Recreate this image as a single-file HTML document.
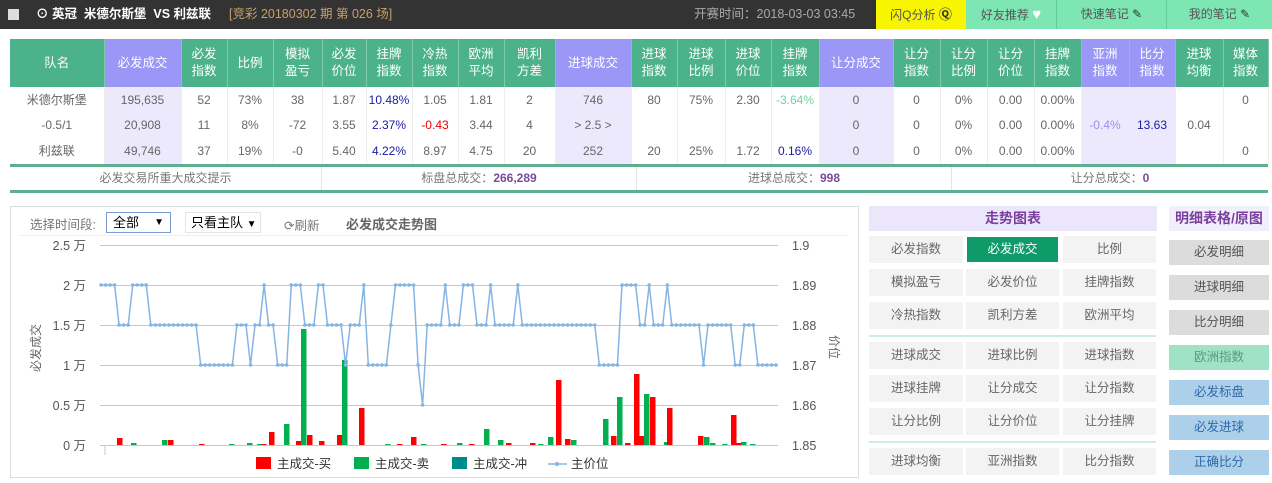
<!DOCTYPE html>
<html><head><meta charset="utf-8">
<style>
*{margin:0;padding:0;box-sizing:border-box}
body{width:1272px;height:483px;background:#fff;font-family:"Liberation Sans","Noto Sans CJK SC",sans-serif;font-size:12px;color:#555;position:relative;overflow:hidden}
.abs{position:absolute}
#top{left:0;top:0;width:1272px;height:29px;background:#333}
.tb{position:absolute;top:0;height:29px;line-height:29px;text-align:center;font-size:12px;color:#555}
table{border-collapse:collapse;position:absolute;left:10px;top:39px;width:1258px;table-layout:fixed}
th{background:#4cb28b;color:#fff;font-weight:normal;font-size:12.5px;height:48px;line-height:17px;border-right:1px solid #7fcaa9}
th.p{background:#9a97f6}
td{height:25.5px;text-align:center;font-size:12px;color:#666;border-right:1px solid #eee}
td.p{background:#ede9fc}
.bl{color:#1a1aa0}.rd{color:#e00}.gr{color:#6fd3a5}.pl{color:#9b8fe8}
#sum{left:10px;top:164px;width:1258px;height:29px;border-top:3px solid #5fae90;border-bottom:3px solid #5fae90}
#sum div{position:absolute;top:0;height:23px;line-height:23px;text-align:center;color:#777;border-right:1px solid #e5e5e5}
#sum b{color:#7a4a9a}
.btn{position:absolute;height:27px;line-height:27px;text-align:center;background:#f3f3f3;color:#666;font-size:12.5px}
.rb{position:absolute;left:1169px;width:100px;height:25px;line-height:25px;text-align:center;font-size:12.5px;background:#dcdcdc;color:#555}
</style></head><body>
<div id="top" class="abs"></div>
<div class="abs" style="left:8px;top:9px;width:11px;height:11px;background:#ddd"></div>
<div class="abs" style="left:36px;top:0;height:29px;line-height:29px;color:#fff;font-weight:bold;font-size:12.5px">⊙ 英冠&nbsp; 米德尔斯堡&nbsp; VS 利兹联</div>
<div class="abs" style="left:229px;top:0;height:29px;line-height:29px;color:#c6a06a;font-size:12.5px">[竞彩 20180302 期 第 026 场]</div>
<div class="abs" style="left:694px;top:0;height:29px;line-height:29px;color:#aaa;font-size:12.5px">开赛时间：2018-03-03 03:45</div>
<div class="tb" style="left:876px;width:90px;background:#f8f500">闪Q分析 <b style="font-size:13px;color:#333">Ⓠ</b></div>
<div class="tb" style="left:966px;width:91px;background:#7ee6b2;border-right:1px solid #5fcf9a">好友推荐 <span style="color:#fff;font-size:15px">♥</span></div>
<div class="tb" style="left:1057px;width:110px;background:#7ee6b2;border-right:1px solid #5fcf9a">快速笔记 <span style="color:#333">✎</span></div>
<div class="tb" style="left:1167px;width:105px;background:#7ee6b2">我的笔记 <span style="color:#333">✎</span></div>

<table>
<colgroup><col style="width:94px"><col style="width:77px"><col style="width:46px"><col style="width:46px"><col style="width:49px"><col style="width:44px"><col style="width:46px"><col style="width:46px"><col style="width:46px"><col style="width:51px"><col style="width:76px"><col style="width:46px"><col style="width:48px"><col style="width:46px"><col style="width:48px"><col style="width:74px"><col style="width:47px"><col style="width:47px"><col style="width:47px"><col style="width:47px"><col style="width:48px"><col style="width:46px"><col style="width:48px"><col style="width:45px"></colgroup>
<tr><th>队名</th><th class="p">必发成交</th><th>必发<br>指数</th><th>比例</th><th>模拟<br>盈亏</th><th>必发<br>价位</th><th>挂牌<br>指数</th><th>冷热<br>指数</th><th>欧洲<br>平均</th><th>凯利<br>方差</th><th class="p">进球成交</th><th>进球<br>指数</th><th>进球<br>比例</th><th>进球<br>价位</th><th>挂牌<br>指数</th><th class="p">让分成交</th><th>让分<br>指数</th><th>让分<br>比例</th><th>让分<br>价位</th><th>挂牌<br>指数</th><th class="p">亚洲<br>指数</th><th class="p">比分<br>指数</th><th>进球<br>均衡</th><th>媒体<br>指数</th></tr>
<tr><td>米德尔斯堡</td><td class="p">195,635</td><td>52</td><td>73%</td><td>38</td><td>1.87</td><td class="bl">10.48%</td><td>1.05</td><td>1.81</td><td>2</td><td class="p">746</td><td>80</td><td>75%</td><td>2.30</td><td class="gr">-3.64%</td><td class="p">0</td><td>0</td><td>0%</td><td>0.00</td><td>0.00%</td><td class="p"></td><td class="p"></td><td></td><td>0</td></tr>
<tr><td>-0.5/1</td><td class="p">20,908</td><td>11</td><td>8%</td><td>-72</td><td>3.55</td><td class="bl">2.37%</td><td class="rd">-0.43</td><td>3.44</td><td>4</td><td class="p">&gt; 2.5 &gt;</td><td></td><td></td><td></td><td></td><td class="p">0</td><td>0</td><td>0%</td><td>0.00</td><td>0.00%</td><td class="p pl">-0.4%</td><td class="p bl">13.63</td><td>0.04</td><td></td></tr>
<tr><td>利兹联</td><td class="p">49,746</td><td>37</td><td>19%</td><td>-0</td><td>5.40</td><td class="bl">4.22%</td><td>8.97</td><td>4.75</td><td>20</td><td class="p">252</td><td>20</td><td>25%</td><td>1.72</td><td class="bl">0.16%</td><td class="p">0</td><td>0</td><td>0%</td><td>0.00</td><td>0.00%</td><td class="p"></td><td class="p"></td><td></td><td>0</td></tr>
</table>
<div id="sum" class="abs">
<div style="left:0;width:312px">必发交易所重大成交提示</div>
<div style="left:312px;width:315px">标盘总成交：<b>266,289</b></div>
<div style="left:627px;width:315px">进球总成交：<b>998</b></div>
<div style="left:942px;width:316px;border:none">让分总成交：<b>0</b></div>
</div>

<div class="abs" style="left:10px;top:206px;width:849px;height:272px;border:1px solid #ddd"></div>
<div class="abs" style="left:30px;top:214px;color:#777;font-size:12.5px">选择时间段:</div>
<div class="abs" style="left:106px;top:212px;width:65px;height:21px;border:1px solid #7a9ad8;font-size:13px;line-height:19px;padding-left:6px;color:#000">全部<span style="position:absolute;right:6px;font-size:10px">▼</span></div>
<div class="abs" style="left:185px;top:212px;width:76px;height:21px;border:1px solid #e5e5e5;font-size:13px;line-height:19px;padding-left:5px;color:#000">只看主队 <span style="font-size:10px">▼</span></div>
<div class="abs" style="left:284px;top:215px;color:#777;font-size:12.5px">⟳刷新</div>
<div class="abs" style="left:346px;top:214px;color:#666;font-size:13px;font-weight:bold">必发成交走势图</div>
<div class="abs" style="left:20px;top:235px;width:828px;height:1px;background:#eee"></div>
<svg class="abs" style="left:0;top:0" width="860" height="483" id="ch">
<g stroke="#c8c8c8" stroke-width="1">
<line x1="100" y1="245.5" x2="778" y2="245.5"/><line x1="100" y1="285.5" x2="778" y2="285.5"/><line x1="100" y1="325.5" x2="778" y2="325.5"/><line x1="100" y1="365.5" x2="778" y2="365.5"/><line x1="100" y1="405.5" x2="778" y2="405.5"/><line x1="100" y1="445.5" x2="778" y2="445.5"/>
<line x1="105" y1="446" x2="105" y2="455"/></g>
<g font-size="12.5" fill="#555" text-anchor="end">
<text x="86" y="250">2.5 万</text><text x="86" y="290">2 万</text><text x="86" y="330">1.5 万</text><text x="86" y="370">1 万</text><text x="86" y="410">0.5 万</text><text x="86" y="450">0 万</text></g>
<g font-size="12.5" fill="#555">
<text x="792" y="250">1.9</text><text x="792" y="290">1.89</text><text x="792" y="330">1.88</text><text x="792" y="370">1.87</text><text x="792" y="410">1.86</text><text x="792" y="450">1.85</text></g>
<text font-size="12" fill="#666" transform="translate(40,372) rotate(-90)">必发成交</text>
<text font-size="12" fill="#666" transform="translate(830,335) rotate(90)">价位</text>
<g id="bars"></g>
<polyline id="pl" fill="none" stroke="#86b5e3" stroke-width="1.5"/>
<g id="dots" fill="#86b5e3"></g>
<rect x="256" y="457" width="15" height="12" fill="#f00"/><text x="277" y="468" font-size="12.5" fill="#333">主成交-买</text>
<rect x="354" y="457" width="15" height="12" fill="#00b050"/><text x="375" y="468" font-size="12.5" fill="#333">主成交-卖</text>
<rect x="452" y="457" width="15" height="12" fill="#008b8b"/><text x="473" y="468" font-size="12.5" fill="#333">主成交-冲</text>
<line x1="548" y1="464" x2="567" y2="464" stroke="#86b5e3" stroke-width="1.5"/><circle cx="557" cy="464" r="2" fill="#86b5e3"/><text x="571" y="468" font-size="12.5" fill="#333">主价位</text>
</svg>

<div class="abs" style="left:869px;top:206px;width:288px;height:25px;line-height:25px;background:#ece6fb;color:#7b3fa0;font-weight:bold;font-size:14px;text-align:center">走势图表</div>
<div class="btn" style="left:869px;top:236px;width:94px">必发指数</div>
<div class="btn" style="left:967px;top:237px;width:91px;height:25px;line-height:25px;background:#0e9a69;color:#fff">必发成交</div>
<div class="btn" style="left:1063px;top:236px;width:93px">比例</div>
<div class="btn" style="left:869px;top:269px;width:94px">模拟盈亏</div>
<div class="btn" style="left:966px;top:269px;width:93px">必发价位</div>
<div class="btn" style="left:1063px;top:269px;width:93px">挂牌指数</div>
<div class="btn" style="left:869px;top:302px;width:94px">冷热指数</div>
<div class="btn" style="left:966px;top:302px;width:93px">凯利方差</div>
<div class="btn" style="left:1063px;top:302px;width:93px">欧洲平均</div>
<div class="abs" style="left:869px;top:335px;width:287px;height:2px;background:#cdeedd"></div>
<div class="btn" style="left:869px;top:342px;width:94px">进球成交</div>
<div class="btn" style="left:966px;top:342px;width:93px">进球比例</div>
<div class="btn" style="left:1063px;top:342px;width:93px">进球指数</div>
<div class="btn" style="left:869px;top:375px;width:94px">进球挂牌</div>
<div class="btn" style="left:966px;top:375px;width:93px">让分成交</div>
<div class="btn" style="left:1063px;top:375px;width:93px">让分指数</div>
<div class="btn" style="left:869px;top:408px;width:94px">让分比例</div>
<div class="btn" style="left:966px;top:408px;width:93px">让分价位</div>
<div class="btn" style="left:1063px;top:408px;width:93px">让分挂牌</div>
<div class="abs" style="left:869px;top:441px;width:287px;height:2px;background:#cdeedd"></div>
<div class="btn" style="left:869px;top:448px;width:94px">进球均衡</div>
<div class="btn" style="left:966px;top:448px;width:93px">亚洲指数</div>
<div class="btn" style="left:1063px;top:448px;width:93px">比分指数</div>

<div class="abs" style="left:1169px;top:206px;width:100px;height:25px;line-height:25px;background:#f1effb;color:#7b3fa0;font-weight:bold;font-size:14px;text-align:center">明细表格/原图</div>
<div class="rb" style="top:240px">必发明细</div>
<div class="rb" style="top:275px">进球明细</div>
<div class="rb" style="top:310px">比分明细</div>
<div class="rb" style="top:345px;background:#9fe2c6;color:#5a9a80">欧洲指数</div>
<div class="rb" style="top:380px;background:#acd0ea;color:#2f6aa8">必发标盘</div>
<div class="rb" style="top:415px;background:#acd0ea;color:#2f6aa8">必发进球</div>
<div class="rb" style="top:450px;background:#acd0ea;color:#2f6aa8">正确比分</div>

<script>
var runs=[[89,4],[88,3],[89,4],[88,11],[87,8],[88,3],[87,1],[88,2],[89,1],[88,2],[87,3],[89,3],[88,3],[89,2],[88,4],[87,1],[88,3],[89,1],[87,5],[88,1],[89,5],[87,1],[86,1],[88,4],[89,1],[88,3],[89,3],[88,3],[89,1],[88,5],[89,1],[88,17],[87,5],[89,4],[88,2],[89,1],[88,3],[89,1],[88,7],[87,1],[88,6],[87,2],[88,3],[87,5]];
var v=[];runs.forEach(function(r){for(var i=0;i<r[1];i++)v.push(r[0]);});
var n=v.length,step=675/(n-1),pts=[],d='';
v.forEach(function(p,i){var x=(101+i*step).toFixed(1),y=445-(p-85)*40;pts.push(x+','+y);d+='<circle cx="'+x+'" cy="'+y+'" r="1.8"/>';});
document.getElementById('pl').setAttribute('points',pts.join(' '));
document.getElementById('dots').innerHTML=d;
var B=[[117,7,'r'],[131,2,'g'],[162,5,'g'],[168,5,'r'],[199,1,'r'],[229,1,'g'],[247,2,'g'],[257,1,'g'],[261,1,'r'],[269,13,'r'],[284,21,'g'],[296,4,'r'],[301,116,'g'],[307,10,'r'],[319,4,'r'],[337,10,'r'],[342,85,'g'],[359,37,'r'],[385,1,'g'],[397,1,'r'],[411,8,'r'],[421,1,'g'],[441,1,'r'],[457,2,'g'],[469,1,'r'],[484,16,'g'],[498,5,'g'],[506,2,'r'],[530,2,'r'],[538,1,'g'],[548,8,'g'],[556,65,'r'],[565,6,'r'],[571,5,'g'],[603,26,'g'],[611,9,'r'],[617,48,'g'],[625,2,'r'],[634,71,'r'],[639,9,'r'],[644,51,'g'],[650,48,'r'],[664,3,'g'],[667,37,'r'],[698,9,'r'],[704,8,'g'],[710,2,'g'],[722,1,'g'],[731,30,'r'],[736,2,'r'],[741,3,'g'],[750,1,'g']];
var h='';B.forEach(function(b){h+='<rect x="'+b[0]+'" y="'+(445-b[1])+'" width="5.5" height="'+b[1]+'" fill="'+(b[2]=='r'?'#f00':'#00b050')+'"/>';});
document.getElementById('bars').innerHTML=h;
</script>
</body></html>
